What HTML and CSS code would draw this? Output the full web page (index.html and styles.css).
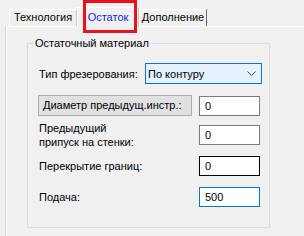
FILE: index.html
```html
<!DOCTYPE html>
<html lang="ru">
<head>
    <meta charset="UTF-8">
    <meta name="viewport" content="width=device-width, initial-scale=1.0">
    <title>Остаток</title>

    <link rel="stylesheet" href="styles.css">
</head>
<body>
    <div class="tabs">
        <div class="tab">Технология</div>
        <div class="tab tab_active">Остаток</div>
        <div class="tab tab_last">Дополнение</div>
        <div class="mark"></div>
    </div>
    <div class="page">
        <fieldset class="group">
            <legend>Остаточный материал</legend>
            <div class="row">
                <span class="lbl lbl_short">Тип фрезерования:</span>
                <div class="combo">
                    <span>По контуру</span>
                    <svg width="9" height="6" viewBox="0 0 9 6"><path d="M0.5 0.5 L4.5 4.5 L8.5 0.5" fill="none" stroke="#444" stroke-width="1"/></svg>
                </div>
            </div>
            <div class="row row_btn">
                <div class="btn">Диаметр предыдущ.инстр.:</div>
                <div class="field field_btn">0</div>
            </div>
            <div class="row row_two">
                <span class="lbl">Предыдущий<br>припуск на стенки:</span>
                <div class="field">0</div>
            </div>
            <div class="row row_overlap">
                <span class="lbl">Перекрытие границ:</span>
                <div class="field field_hover">0</div>
            </div>
            <div class="row row_feed">
                <span class="lbl">Подача:</span>
                <div class="field field_focus">500</div>
            </div>
        </fieldset>
    </div>
</body>
</html>
```

FILE: styles.css
```css
body {
    margin: 0;
    width: 304px;
    height: 236px;
    overflow: hidden;
    background: #f0f0f0;
    font-family: "Liberation Sans", Arial, sans-serif;
    font-size: 11px;
    color: #000;
    white-space: nowrap;
    }
.tabs {
    position: relative;
    display: flex;
    align-items: flex-end;
    height: 26px;
    padding-left: 9px;
    }
.tab {
    box-sizing: border-box;
    width: 68px;
    height: 17px;
    line-height: 15px;
    text-align: center;
    border-top: 1px solid #fff;
    border-left: 1px solid #fff;
    border-right: 1px solid #c8c8c8;
    background: #f0f0f0;
    }
.tab_active {
    position: relative;
    z-index: 1;
    width: 62px;
    height: 20px;
    line-height: 18px;
    margin-bottom: -1px;
    color: #1c1cdc;
    }
.tab_last {
    border-right-color: #696969;
    }
.mark {
    position: absolute;
    left: 83px;
    top: 0;
    width: 54px;
    height: 33px;
    box-sizing: border-box;
    border: 3px solid #e8121c;
    z-index: 2;
    }
.page {
    margin-left: 6px;
    height: 209px;
    border-top: 1px solid #fff;
    border-left: 1px solid #fff;
    box-shadow: -1px 0 0 #dadada;
    }
.group {
    box-sizing: border-box;
    width: 243px;
    margin: 9px 0 0 20px;
    padding: 12px 0 20px 11px;
    border: 1px solid #dcdcdc;
    }
.group legend {
    margin-left: -5px;
    padding: 0 1px;
    line-height: 15px;
    }
.row {
    display: flex;
    align-items: center;
    }
.row_btn {
    align-items: flex-start;
    margin-top: 11px;
    }
.row_two {
    margin-top: 5px;
    }
.row_overlap {
    margin-top: 7px;
    }
.row_feed {
    margin-top: 11px;
    }
.lbl {
    width: 160px;
    line-height: 14px;
    }
.lbl_short {
    width: 106px;
    }
.combo {
    box-sizing: border-box;
    display: flex;
    align-items: center;
    justify-content: space-between;
    width: 117px;
    height: 21px;
    padding: 0 5px 0 2px;
    border: 1px solid #0078d7;
    background: #e5f1fb;
    }
.btn {
    box-sizing: border-box;
    width: 154px;
    height: 21px;
    margin-left: -1px;
    padding-left: 4px;
    line-height: 19px;
    border: 1px solid #adadad;
    background: #e1e1e1;
    }
.field {
    box-sizing: border-box;
    width: 61px;
    height: 20px;
    padding-left: 5px;
    line-height: 18px;
    border: 1px solid #7a7a7a;
    background: #fff;
    }
.field_btn {
    margin: 1px 0 0 7px;
    }
.field_hover {
    border-color: #000;
    }
.field_focus {
    border-color: #0078d7;
    }
```
